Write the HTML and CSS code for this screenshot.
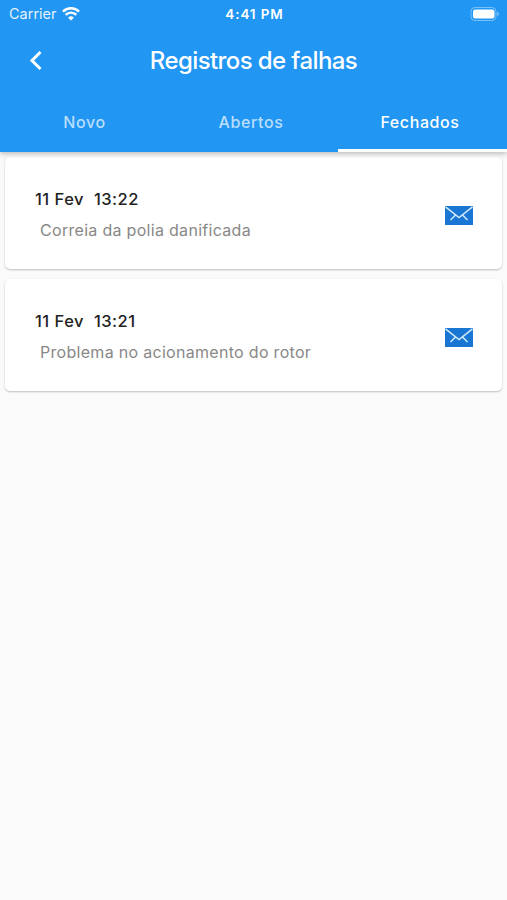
FILE: index.html
```html
<!DOCTYPE html>
<html lang="pt-BR">

<head>
    <meta charset="utf-8">
    <meta name="viewport" content="width=device-width, initial-scale=1.0">
    <title>Registros de falhas</title>
    <link rel="stylesheet" href="styles.css">
</head>

<body>

    <header class="header">
        <div class="status-bar">
            <div class="network">
                <span class="carrier">Carrier</span>
                <svg class="wifi" viewBox="0 0 18 14" width="18" height="14">
                    <path d="M1 4.6a11.4 11.4 0 0 1 16 0" />
                    <path d="M3.7 7.9a7.4 7.4 0 0 1 10.600 0" />
                    <path class="dot" d="M9 13.6L6.1 10.7a4.1 4.1 0 0 1 5.8 0z" />
                </svg>
            </div>
            <span class="time">4:41 PM</span>
            <svg class="battery" viewBox="0 0 30 14" width="30" height="14">
                <rect class="case" x="1" y="0.5" width="25" height="13" rx="4" />
                <rect class="charge" x="3" y="2.5" width="21.5" height="9" rx="2.2" />
                <path class="tip" d="M27.3 4.8c2 .8 2 3.6 0 4.4z" />
            </svg>
        </div>
        <div class="title-bar">
            <button class="back" aria-label="Voltar">
                <svg viewBox="0 0 14 20" width="14" height="22">
                    <path d="M11.500 2L3 10.500l8.500 8.500" />
                </svg>
            </button>
            <h1 class="title">Registros de falhas</h1>
        </div>
        <nav class="tabs">
            <a class="tab">Novo</a>
            <a class="tab">Abertos</a>
            <a class="tab active">Fechados</a>
        </nav>
    </header>

    <main class="list">
        <article class="card">
            <div class="info">
                <div class="date">11 Fev&nbsp; 13:22</div>
                <div class="description">Correia da polia danificada</div>
            </div>
            <svg class="mail" viewBox="0 0 28 19" width="28" height="19">
                <rect width="28" height="19" />
                <path d="M0.5 0.8L14 11.5L27.5 0.8M5.5 14L10.5 9M22.5 14L17.5 9" />
            </svg>
        </article>
        <article class="card">
            <div class="info">
                <div class="date">11 Fev&nbsp; 13:21</div>
                <div class="description">Problema no acionamento do rotor</div>
            </div>
            <svg class="mail" viewBox="0 0 28 19" width="28" height="19">
                <rect width="28" height="19" />
                <path d="M0.5 0.8L14 11.5L27.5 0.8M5.5 14L10.5 9M22.5 14L17.5 9" />
            </svg>
        </article>
    </main>

</body>

</html>
```
FILE: styles.css
```css
body {
    margin: 0;
    min-height: 100vh;
    background: #fafafa;
    font-family: Inter, "Liberation Sans", sans-serif;
}

.header {
    position: relative;
    height: 152px;
    background: #2196f3;
    color: #fff;
    box-shadow: 0 2px 5px rgba(0, 0, 0, 0.24);
}

.status-bar {
    display: grid;
    grid-template-columns: 1fr auto 1fr;
    align-items: center;
    height: 27px;
    padding: 0 7px 0 9px;
    box-sizing: border-box;
}

.network {
    display: flex;
    align-items: center;
    gap: 5px;
}

.carrier {
    font-size: 14.5px;
    opacity: 0.88;
}

.wifi {
    fill: none;
    stroke: #fff;
    stroke-width: 2.4;
}

.wifi .dot {
    fill: #fff;
    stroke: none;
}

.time {
    font-size: 13.5px;
    font-weight: 600;
    letter-spacing: 0.9px;
}

.battery {
    justify-self: end;
}

.battery .case {
    fill: none;
    stroke: rgba(255, 255, 255, 0.4);
}

.battery .charge {
    fill: #fff;
}

.battery .tip {
    fill: rgba(255, 255, 255, 0.5);
}

.title-bar {
    display: grid;
    grid-template-columns: 71px 1fr 71px;
    align-items: center;
    height: 66px;
}

.back {
    display: flex;
    justify-content: center;
    padding: 0;
    border: none;
    background: none;
}

.back path {
    fill: none;
    stroke: #fff;
    stroke-width: 3;
}

.title {
    margin: 0;
    font-size: 24px;
    font-weight: 500;
    letter-spacing: -0.6px;
    text-align: center;
}

.tabs {
    display: grid;
    grid-template-columns: repeat(3, 1fr);
    height: 59px;
}

.tab {
    padding-top: 3px;
    border-bottom: 3px solid transparent;
    line-height: 52px;
    font-size: 16px;
    font-weight: 500;
    letter-spacing: 0.6px;
    text-align: center;
    color: rgba(255, 255, 255, 0.7);
    box-sizing: border-box;
}

.tab + .tab {
    padding-right: 5px;
}

.tab.active {
    border-bottom-color: #fff;
    color: #fff;
}

.list {
    display: flex;
    flex-direction: column;
    gap: 10px;
    padding: 5px;
}

.card {
    display: flex;
    align-items: center;
    justify-content: space-between;
    height: 112px;
    padding: 4px 29px 0 30px;
    border-radius: 5px;
    background: #fff;
    box-shadow: 0 1px 2px rgba(0, 0, 0, 0.24);
    box-sizing: border-box;
}

.date {
    line-height: 24px;
    font-size: 16.5px;
    font-weight: 500;
    letter-spacing: 0.5px;
    color: #222;
}

.description {
    padding: 5px 0 0 5px;
    line-height: 28px;
    font-size: 16px;
    letter-spacing: 0.3px;
    color: #888;
}

.mail rect {
    fill: #1976d2;
}

.mail path {
    fill: none;
    stroke: #cfe8ff;
    stroke-width: 1.5;
}
```
